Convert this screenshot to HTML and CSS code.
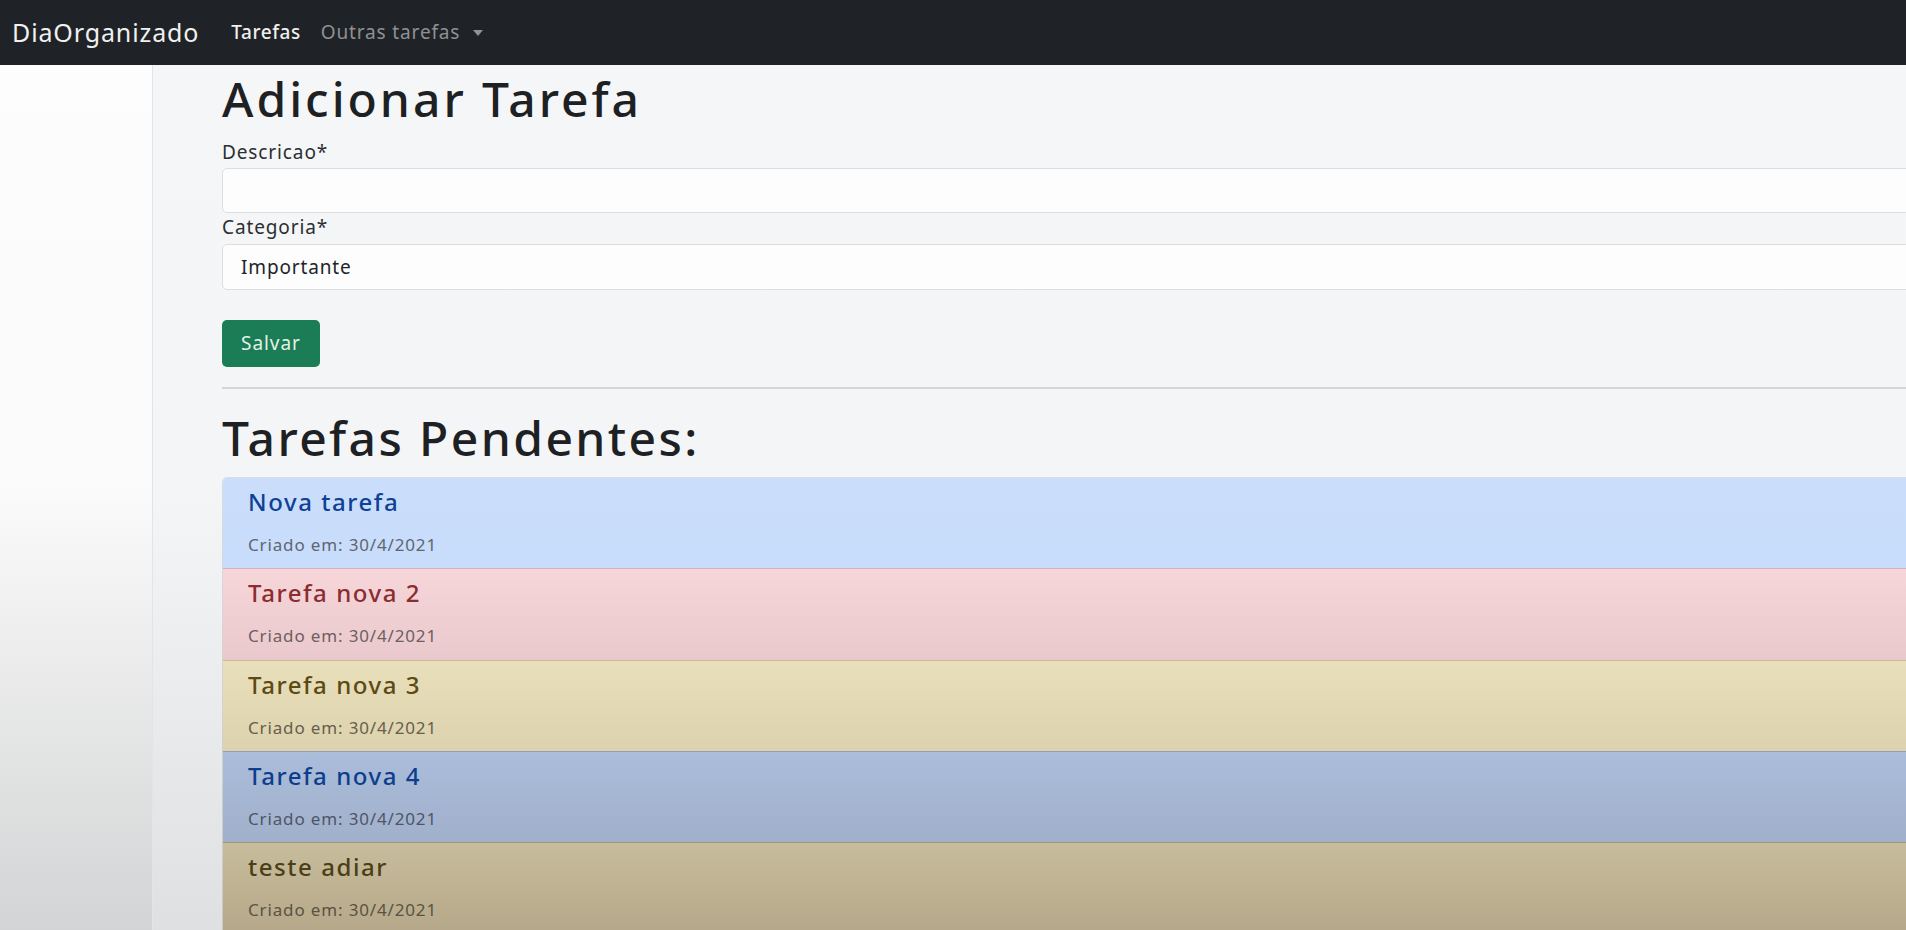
FILE: index.html
```html
<!DOCTYPE html>
<html lang="pt-BR">
<head>
<meta charset="utf-8">
<title>DiaOrganizado</title>
<link rel="stylesheet" href="styles.css">
</head>
<body>
<nav class="navbar">
  <a class="brand" href="#">DiaOrganizado</a>
  <ul class="nav">
    <li><a class="nav-link active" href="#">Tarefas</a></li>
    <li><a class="nav-link" href="#">Outras tarefas<span class="caret"></span></a></li>
  </ul>
</nav>
<div class="page">
  <aside class="sidebar"></aside>
  <main class="main">
    <div class="content">
      <h1 class="title">Adicionar Tarefa</h1>
      <form class="form">
        <label class="label" for="descricao">Descricao*</label>
        <input class="control" id="descricao" type="text">
        <label class="label" for="categoria">Categoria*</label>
        <select class="control select" id="categoria">
          <option>Importante</option>
        </select>
        <button class="btn" type="button">Salvar</button>
      </form>
      <hr class="divider">
      <h1 class="title title-list">Tarefas Pendentes:</h1>
      <ul class="list">
        <li class="item item-1"><h5 class="item-title">Nova tarefa</h5><small class="item-date">Criado em: 30/4/2021</small></li>
        <li class="item item-2"><h5 class="item-title">Tarefa nova 2</h5><small class="item-date">Criado em: 30/4/2021</small></li>
        <li class="item item-3"><h5 class="item-title">Tarefa nova 3</h5><small class="item-date">Criado em: 30/4/2021</small></li>
        <li class="item item-4"><h5 class="item-title">Tarefa nova 4</h5><small class="item-date">Criado em: 30/4/2021</small></li>
        <li class="item item-5"><h5 class="item-title">teste adiar</h5><small class="item-date">Criado em: 30/4/2021</small></li>
      </ul>
    </div>
  </main>
</div>
</body>
</html>
```

FILE: styles.css
```css
html, body {
  margin: 0;
  height: 100%;
}

body {
  overflow: hidden;
  font-family: "Noto Sans", "Open Sans", sans-serif;
  letter-spacing: 0.055em;
  color: #212529;
  background: #f5f6f7;
}

.navbar {
  height: 65px;
  background: #1f2226;
  display: flex;
  align-items: center;
  padding-left: 12px;
}

.brand {
  font-size: 25px;
  line-height: 1.5;
  letter-spacing: 0.035em;
  color: #f0f0f0;
  text-decoration: none;
  margin-right: 32px;
}

.nav {
  display: flex;
  gap: 20px;
  list-style: none;
  margin: 0;
  padding: 0;
}

.nav-link {
  display: flex;
  align-items: center;
  font-size: 19px;
  line-height: 1.5;
  letter-spacing: 0.045em;
  color: rgba(255, 255, 255, 0.5);
  text-decoration: none;
}

.nav-link.active {
  color: #efefef;
  font-weight: 500;
  letter-spacing: 0.03em;
}

.caret {
  width: 0;
  height: 0;
  border-left: 5.5px solid transparent;
  border-right: 5.5px solid transparent;
  border-top: 6px solid currentColor;
  margin-left: 13px;
}

.page {
  display: flex;
  height: calc(100% - 65px);
}

.sidebar {
  width: 152px;
  flex: none;
  border-right: 1px solid #e3e4e6;
  background: linear-gradient(#fdfdfd 0%, #fafafa 50%, #d3d4d5 100%);
}

.main {
  flex: 1;
  min-width: 0;
  overflow: hidden;
  padding: 5px 0 0 69px;
  background: linear-gradient(#f5f6f7 0%, #f4f5f6 50%, #dfe0e1 100%);
}

.content {
  margin-right: -30px;
}

.title {
  font-size: 48px;
  font-weight: 500;
  line-height: 1.2;
  letter-spacing: 0.062em;
  color: #1e2124;
  margin: 0 0 10px;
}

.title-list {
  letter-spacing: 0.05em;
  margin-bottom: 11px;
}

.form {
  margin: 0;
}

.label {
  display: block;
  font-size: 19px;
  line-height: 1.5;
  color: #2b2e32;
  margin-bottom: 2px;
}

.control {
  display: block;
  box-sizing: border-box;
  width: 100%;
  height: 45px;
  margin: 0;
  padding: 0 18px;
  border: 1px solid #dcdfe2;
  border-radius: 5px;
  background: #fdfdfe;
  font-family: inherit;
  font-size: 19px;
  letter-spacing: 0.045em;
  color: #212529;
}

.select {
  height: 46px;
  margin-bottom: 30px;
  appearance: none;
  -webkit-appearance: none;
}

.btn {
  height: 47px;
  padding: 0 19px;
  border: 0;
  border-radius: 5px;
  background: #1a7d55;
  color: #e4f1ea;
  font-family: inherit;
  font-size: 19px;
  letter-spacing: 0.05em;
}

.divider {
  border: 0;
  border-top: 2px solid #d3d5d7;
  margin: 20px 0 20px;
}

.list {
  list-style: none;
  margin: 0;
  padding: 0;
  border: 1px solid rgba(0, 0, 0, 0.1);
  border-bottom: 0;
  border-radius: 5px 5px 0 0;
  overflow: hidden;
}

.item {
  padding: 10px 25px 11px;
  border-top: 1px solid rgba(0, 0, 0, 0.1);
}

.item:first-child {
  border-top: 0;
}

.item-title {
  font-size: 24px;
  font-weight: 500;
  line-height: 1.2;
  letter-spacing: 0.065em;
  margin: 0 0 15px;
}

.item-date {
  display: block;
  font-size: 17px;
  line-height: 1.5;
  letter-spacing: 0.05em;
  color: #5e6671;
}

.item-1 {
  background: linear-gradient(#cadefc, #c8dcfb);
  color: #0f4196;
}

.item-2 {
  background: linear-gradient(#f7d6d9, #e9c9cb);
  color: #8b2c31;
}

.item-2 .item-date {
  color: #6e5f62;
}

.item-3 {
  background: linear-gradient(#e9dfba, #dcd2ad);
  color: #5b4a14;
}

.item-3 .item-date {
  color: #675f4d;
}

.item-4 {
  background: linear-gradient(#aabdda, #a1b0cb);
  color: #0d3e8e;
}

.item-4 .item-date {
  color: #4d5668;
}

.item-5 {
  background: linear-gradient(#c7bc9b, #b5a88a);
  color: #4a3f16;
}

.item-5 .item-date {
  color: #5a5342;
}
```
